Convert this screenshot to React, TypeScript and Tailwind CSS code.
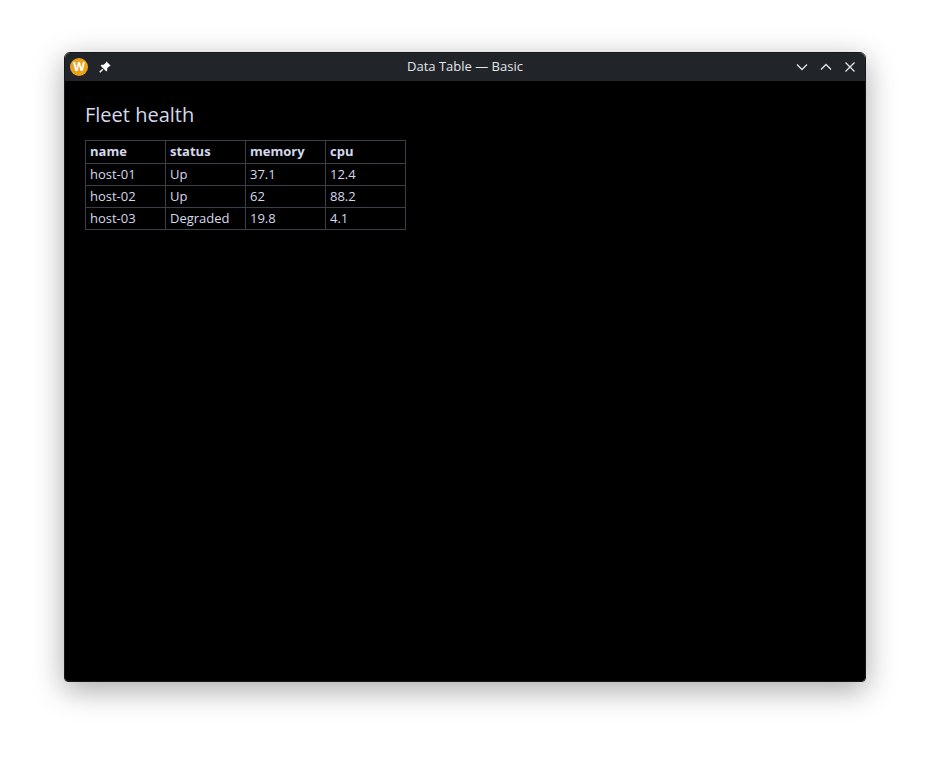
import React from "react";

export default function App() {
  const rows = [
    ["host-01", "Up", "37.1", "12.4"],
    ["host-02", "Up", "62", "88.2"],
    ["host-03", "Degraded", "19.8", "4.1"],
  ];
  return (
    <div className="w-[930px] h-[758px] bg-white pt-[52px] pl-[64px]" style={{ fontFamily: '"Open Sans", "Noto Sans", sans-serif' }}>
      <div className="w-[802px] h-[630px] flex flex-col rounded-t-[6px] rounded-b-[4px] overflow-hidden border border-[#15171a] shadow-[0_8px_30px_rgba(0,0,0,0.35)]">
        <div className="h-[28px] bg-[#212428] flex items-center px-[5px] relative shrink-0">
          <div className="w-[18px] h-[18px] rounded-full bg-[#e9a21b] flex items-center justify-center text-white text-[12px] font-bold leading-none">W</div>
          <svg width="14" height="14" viewBox="0 0 16 16" className="ml-[10px]" fill="white">
            <path d="M9.5 1.5 L14.5 6.5 L13 7 L10.5 9.5 L10.5 12 L9.5 13 L3 6.5 L4 5.5 L6.5 5.5 L9 3 Z" />
            <path d="M5.5 10.5 L2 14" stroke="white" strokeWidth="1.6" />
          </svg>
          <div className="absolute inset-0 flex items-center justify-center text-[13px] text-[#e3e5e8] pointer-events-none">Data Table — Basic</div>
          <div className="ml-auto flex items-center gap-[10px] mr-[3px]">
            <svg width="14" height="14" viewBox="0 0 14 14" fill="none" stroke="#e3e5e8" strokeWidth="1.3"><path d="M2 4.5 L7 9.5 L12 4.5" /></svg>
            <svg width="14" height="14" viewBox="0 0 14 14" fill="none" stroke="#e3e5e8" strokeWidth="1.3"><path d="M2 9.5 L7 4.5 L12 9.5" /></svg>
            <svg width="14" height="14" viewBox="0 0 14 14" fill="none" stroke="#e3e5e8" strokeWidth="1.3"><path d="M2.5 2.5 L11.5 11.5 M11.5 2.5 L2.5 11.5" /></svg>
          </div>
        </div>
        <div className="flex-1 bg-black pl-[20px] pt-[20px] text-[#d5d9ec]">
          <div className="text-[20px] leading-[28px] mb-[11px]">Fleet health</div>
          <table className="border-collapse text-[13px]">
            <thead>
              <tr>
                {["name", "status", "memory", "cpu"].map((h) => (
                  <th key={h} className="border border-[#3d3f48] w-[80px] h-[23px] text-left font-bold px-[4px] py-0">{h}</th>
                ))}
              </tr>
            </thead>
            <tbody>
              {rows.map((r) => (
                <tr key={r[0]}>
                  {r.map((c, i) => (
                    <td key={i} className="border border-[#3d3f48] h-[22px] px-[4px] py-0">{c}</td>
                  ))}
                </tr>
              ))}
            </tbody>
          </table>
        </div>
      </div>
    </div>
  );
}
